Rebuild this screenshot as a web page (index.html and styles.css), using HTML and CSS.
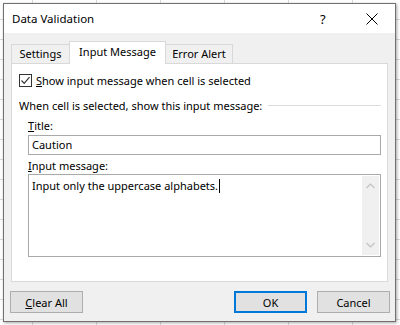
FILE: index.html
```html
<!DOCTYPE html>
<html lang="en">
<head>
    <meta charset="UTF-8">
    <title>Data Validation</title>
    <link rel="stylesheet" href="styles.css">
</head>
<body>

<div class="dialog">
    <div class="titlebar">
        <span class="title">Data Validation</span>
        <span class="help">?</span>
        <svg class="close" width="12" height="12" viewBox="0 0 12 12">
            <path d="M0.5 0.5 L11.5 11.5 M11.5 0.5 L0.5 11.5" stroke="#000" stroke-width="1" fill="none"/>
        </svg>
    </div>

    <div class="tabs">
        <div class="tab tab-first">Settings</div>
        <div class="tab active">Input Message</div>
        <div class="tab tab-last">Error Alert</div>
    </div>

    <div class="panel">
        <div class="check-row">
            <span class="checkbox">
                <svg width="11" height="11" viewBox="0 0 11 11">
                    <path d="M1.5 5.5 L4.2 8.3 L9.5 2.2" stroke="#333" stroke-width="1.2" fill="none"/>
                </svg>
            </span>
            <span><u>S</u>how input message when cell is selected</span>
        </div>

        <div class="group-head">
            <span>When cell is selected, show this input message:</span>
            <span class="rule"></span>
        </div>

        <div class="fields">
            <div class="field-label"><u>T</u>itle:</div>
            <div class="text-box">Caution</div>

            <div class="field-label label-msg"><u>I</u>nput message:</div>
            <div class="memo">
                <div class="memo-text">Input only the uppercase alphabets.<span class="caret"></span></div>
                <div class="scrollbar">
                    <svg width="9" height="6" viewBox="0 0 9 6">
                        <path d="M0.5 5 L4.5 1 L8.5 5" stroke="#c2c2c2" stroke-width="1.2" fill="none"/>
                    </svg>
                    <svg width="9" height="6" viewBox="0 0 9 6">
                        <path d="M0.5 1 L4.5 5 L8.5 1" stroke="#c2c2c2" stroke-width="1.2" fill="none"/>
                    </svg>
                </div>
            </div>
        </div>
    </div>

    <div class="buttons">
        <button class="btn"><u>C</u>lear All</button>
        <span class="spacer"></span>
        <button class="btn btn-default">OK</button>
        <button class="btn">Cancel</button>
    </div>
</div>

</body>
</html>
```

FILE: styles.css
```css
html, body {
    margin: 0;
    height: 100%;
}
body {
    font-family: "Noto Sans", "Liberation Sans", sans-serif;
    font-size: 11px;
    color: #000;
    background-color: #fff;
    background-image:
        linear-gradient(to right, #dadada 1px, transparent 1px),
        linear-gradient(to bottom, #dadada 1px, transparent 1px);
    background-size: 64px 20px;
    background-position: 32px 19px;
    overflow: hidden;
}
.dialog {
    margin: 3px 0 0 3px;
    width: 393px;
    height: 319px;
    box-sizing: border-box;
    border: 1px solid #707070;
    background-color: #f0f0f0;
    display: flex;
    flex-direction: column;
    box-shadow: 1px 1px 3px rgba(0,0,0,0.35);
}
.titlebar {
    height: 29px;
    background-color: #fff;
    display: flex;
    align-items: center;
    padding-left: 8px;
}
.title {
    flex: 1;
    font-size: 11.5px;
}
.help {
    width: 12px;
    margin-right: 34px;
    font-size: 13px;
}
.close {
    margin-right: 17px;
}
.tabs {
    display: flex;
    align-items: flex-end;
    height: 22px;
    margin: 8px 7px 0;
}
.tab {
    box-sizing: border-box;
    height: 19px;
    border: 1px solid #d9d9d9;
    border-bottom: none;
    display: flex;
    align-items: center;
    justify-content: center;
    padding-bottom: 1px;
}
.tab-first {
    width: 58px;
    border-right: none;
}
.tab-last {
    width: 67px;
    border-left: none;
}
.tab.active {
    width: 97px;
    height: 23px;
    margin-bottom: -1px;
    background-color: #fff;
    position: relative;
    z-index: 1;
    padding-bottom: 3px;
}
.panel {
    height: 219px;
    box-sizing: border-box;
    margin: 0 7px;
    border: 1px solid #d9d9d9;
    background-color: #fff;
    padding: 8px 6px 0 7px;
}
.check-row {
    display: flex;
    align-items: center;
    height: 16px;
}
.checkbox {
    width: 11px;
    height: 11px;
    border: 1px solid #333;
    margin-right: 4px;
    display: flex;
}
.group-head {
    display: flex;
    align-items: center;
    height: 16px;
    margin-top: 9px;
}
.rule {
    flex: 1;
    height: 1px;
    background-color: #dcdcdc;
    margin-left: 6px;
}
.fields {
    padding-left: 9px;
}
.field-label {
    height: 16px;
    line-height: 16px;
    margin-top: 5px;
}
.label-msg {
    margin-top: 3px;
}
.text-box {
    margin-top: 1px;
    height: 20px;
    box-sizing: border-box;
    border: 1px solid #a9a9a9;
    padding-left: 3px;
    line-height: 18px;
}
.memo {
    height: 83px;
    box-sizing: border-box;
    border: 1px solid #a9a9a9;
    display: flex;
    padding: 1px 1px 1px 0;
}
.memo-text {
    flex: 1;
    padding: 2px 0 0 3px;
    line-height: 16px;
}
.caret {
    display: inline-block;
    width: 1px;
    height: 14px;
    background-color: #000;
    vertical-align: -3px;
    margin-left: 1px;
}
.scrollbar {
    width: 17px;
    background-color: #f0f0f0;
    display: flex;
    flex-direction: column;
    align-items: center;
    justify-content: space-between;
    padding: 7px 0 7px;
}
.buttons {
    display: flex;
    margin-top: 9px;
    padding: 0 5px 0 6px;
}
.spacer {
    flex: 1;
}
.btn {
    width: 73px;
    height: 22px;
    box-sizing: border-box;
    border: 1px solid #adadad;
    background-color: #e1e1e1;
    font-family: inherit;
    font-size: 11px;
    color: #000;
    padding: 0;
    margin: 0;
}
.btn-default {
    border: 2px solid #0078d7;
    margin-right: 10px;
}
```
